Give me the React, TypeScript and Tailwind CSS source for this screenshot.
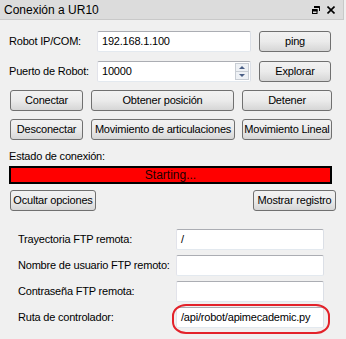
import React from "react";

const btn =
  "flex h-[21px] items-center justify-center whitespace-nowrap rounded-[3px] border border-[#707070] bg-linear-to-b from-[#f2f2f2] via-[#ebebeb] to-[#d6d6d6] text-[11px] leading-none text-black";

const field =
  "h-[21px] rounded-[2px] border border-[#abadb3] border-b-[#e3e9ef] border-r-[#dbdfe6] border-l-[#e2e3ea] bg-white px-[4px] text-[11px] leading-[19px] text-black";

function Button({ label, className }: { label: string; className: string }) {
  return <div className={`${btn} ${className}`}>{label}</div>;
}

function FtpRow({ label, value, marked }: { label: string; value?: string; marked?: boolean }) {
  return (
    <div className="flex h-[20px] items-center">
      <span className="w-[158px] shrink-0 whitespace-nowrap">{label}</span>
      <div className="relative">
        <div className={`${field} h-[20px] w-[148px] leading-[18px]`}>{value}</div>
        {marked && (
          <div className="pointer-events-none absolute -left-[4px] -right-[6px] -top-[3px] -bottom-[6px] rounded-[14px/12px] border-2 border-[#e3222a]" />
        )}
      </div>
    </div>
  );
}

export default function App() {
  return (
    <div className="h-[339px] w-[346px] overflow-hidden bg-[#f0f0f0] font-['Liberation_Sans',Arial,sans-serif] text-[11px] tracking-[-0.2px] text-black">
      <div className="flex h-[20px] w-[344px] items-center justify-between border-b border-r border-[#c9c9c9] bg-[#dcdcdc] pl-[4px] pr-[8px]">
        <span className="text-[12px] tracking-normal">Conexión a UR10</span>
        <div className="flex items-center gap-[7px]">
          <svg width="8" height="8" viewBox="0 0 8 8" className="mt-[1px]">
            <path d="M2.5 0.5h5v4.5" fill="none" stroke="#000" strokeWidth="1" />
            <path d="M2 1h5.5" stroke="#000" strokeWidth="2" />
            <rect x="0.5" y="3.5" width="4.5" height="4" fill="none" stroke="#000" strokeWidth="1" />
            <path d="M0 4.5h5.5" stroke="#000" strokeWidth="2" />
          </svg>
          <svg width="8" height="8" viewBox="0 0 8 8" className="mt-[1px]">
            <path d="M0.5 0.5L7.5 7.5M7.5 0.5L0.5 7.5" stroke="#000" strokeWidth="1.6" />
          </svg>
        </div>
      </div>

      <div className="flex flex-col px-[9px] pt-[11px]">
        <div className="flex items-center">
          <span className="w-[88px] shrink-0">Robot IP/COM:</span>
          <div className={`${field} w-[154px]`}>192.168.1.100</div>
          <Button label="ping" className="ml-[8px] w-[72px]" />
        </div>

        <div className="mt-[9px] flex items-center">
          <span className="w-[88px] shrink-0">Puerto de Robot:</span>
          <div className={`${field} flex w-[154px] items-center justify-between pr-[1px]`}>
            <span>10000</span>
            <div className="flex h-[17px] w-[14px] flex-col border border-[#c8cdd4] bg-[#eef1f5]">
              <div className="flex flex-1 items-center justify-center border-b border-[#c8cdd4]">
                <svg width="6" height="3" viewBox="0 0 6 3"><path d="M0 3L3 0L6 3Z" fill="#4a5f86" /></svg>
              </div>
              <div className="flex flex-1 items-center justify-center">
                <svg width="6" height="3" viewBox="0 0 6 3"><path d="M0 0L3 3L6 0Z" fill="#4a5f86" /></svg>
              </div>
            </div>
          </div>
          <Button label="Explorar" className="ml-[8px] w-[72px]" />
        </div>

        <div className="mt-[8px] flex items-center">
          <Button label="Conectar" className="ml-[1px] w-[73px]" />
          <Button label="Obtener posición" className="ml-[8px] w-[143px]" />
          <Button label="Detener" className="ml-[8px] w-[90px]" />
        </div>

        <div className="mt-[8px] flex items-center">
          <Button label="Desconectar" className="ml-[1px] w-[73px]" />
          <Button label="Movimiento de articulaciones" className="ml-[8px] w-[144px]" />
          <Button label="Movimiento Lineal" className="ml-[7px] w-[90px]" />
        </div>

        <div className="mt-[9px] h-[14px] leading-[14px]">Estado de conexión:</div>

        <div className="mt-[3px] flex h-[18px] w-[323px] items-center justify-center border-2 border-black bg-[#ff0000] text-[12px] tracking-normal text-[#1a0000]">
          Starting...
        </div>

        <div className="mt-[6px] flex items-center justify-between pr-[1px]">
          <Button label="Ocultar opciones" className="ml-[1px] w-[86px]" />
          <Button label="Mostrar registro" className="w-[83px]" />
        </div>

        <div className="mt-[18px] flex flex-col gap-[6px] pl-[9px]">
          <FtpRow label="Trayectoria FTP remota:" value="/" />
          <FtpRow label="Nombre de usuario FTP remoto:" />
          <FtpRow label="Contraseña FTP remota:" />
          <FtpRow label="Ruta de controlador:" value="/api/robot/apimecademic.py" marked />
        </div>
      </div>
    </div>
  );
}
